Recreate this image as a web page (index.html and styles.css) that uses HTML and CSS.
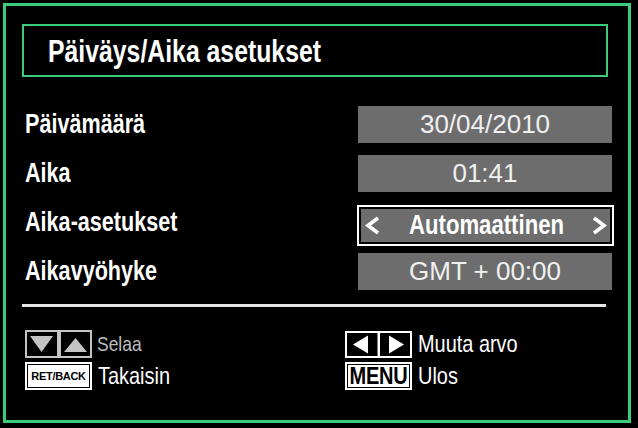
FILE: index.html
```html
<!DOCTYPE html>
<html lang="fi">
<head>
<meta charset="utf-8">
<title>Päiväys/Aika asetukset</title>
<link rel="stylesheet" href="styles.css">
</head>
<body>
<div class="frame">
  <div class="title"><h1>Päiväys/Aika asetukset</h1></div>
  <div class="rows">
    <div class="row"><span class="label">Päivämäärä</span><span class="value">30/04/2010</span></div>
    <div class="row"><span class="label">Aika</span><span class="value">01:41</span></div>
    <div class="row"><span class="label">Aika-asetukset</span>
      <span class="value selected">
        <svg class="chev" width="15" height="19" viewBox="0 0 15 19"><polyline points="13,2 3,9.5 13,17" fill="none" stroke="#fff" stroke-width="3.6"/></svg>
        <span class="sel-text">Automaattinen</span>
        <svg class="chev" width="15" height="19" viewBox="0 0 15 19"><polyline points="2,2 12,9.5 2,17" fill="none" stroke="#fff" stroke-width="3.6"/></svg>
      </span>
    </div>
    <div class="row"><span class="label">Aikavyöhyke</span><span class="value">GMT + 00:00</span></div>
  </div>
  <div class="divider"></div>
  <div class="footer">
    <div class="hint dim">
      <svg width="67" height="28" viewBox="0 0 67 28">
        <rect x="1" y="1" width="32" height="26" fill="#000" stroke="#c4c4c4" stroke-width="2"/>
        <rect x="35" y="1" width="31" height="26" fill="#000" stroke="#c4c4c4" stroke-width="2"/>
        <polygon points="5,6 28,6 16.5,22" fill="#c4c4c4"/>
        <polygon points="39,22 62,22 50.5,8" fill="#c4c4c4"/>
      </svg>
      <span class="htext">Selaa</span>
    </div>
    <div class="hint">
      <svg width="67" height="27" viewBox="0 0 67 27">
        <rect x="1" y="1" width="65" height="25" fill="#000" stroke="#fff" stroke-width="2"/>
        <rect x="32.5" y="1" width="2.5" height="25" fill="#fff"/>
        <polygon points="8,13.5 23,4.5 23,22.5" fill="#fff"/>
        <polygon points="44,4.5 44,22.5 59,13.5" fill="#fff"/>
      </svg>
      <span class="htext">Muuta arvo</span>
    </div>
    <div class="hint">
      <span class="key"><span class="key-in"><span class="ret">RET/BACK</span></span></span>
      <span class="htext">Takaisin</span>
    </div>
    <div class="hint">
      <span class="key"><span class="key-in"><span class="menu">MENU</span></span></span>
      <span class="htext">Ulos</span>
    </div>
  </div>
</div>
</body>
</html>
```

FILE: styles.css
```css
html, body {
  margin: 0;
  padding: 0;
}
body {
  background: #000;
  width: 638px;
  height: 428px;
  overflow: hidden;
  color: #fff;
  font-family: "Liberation Sans", Arial, sans-serif;
}
.frame {
  box-sizing: border-box;
  margin: 3px 0 0 3px;
  width: 628px;
  height: 420px;
  border: 3px solid #3ccb7a;
  padding: 18px 0 0 16px;
}
.title {
  box-sizing: border-box;
  width: 586px;
  height: 53px;
  border: 2px solid #3ccb7a;
  display: flex;
  align-items: center;
  padding-left: 24px;
}
.title h1 {
  margin: 0;
  font-size: 31px;
  font-weight: bold;
  line-height: 1;
  padding-top: 2px;
  white-space: nowrap;
  transform: scaleX(0.8);
  transform-origin: left center;
}
.rows {
  margin-top: 23px;
  padding-left: 3px;
}
.row {
  display: grid;
  grid-template-columns: 333px 254px;
  height: 49px;
  align-items: center;
}
.label {
  font-weight: bold;
  font-size: 27px;
  white-space: nowrap;
  transform: scaleX(0.8);
  transform-origin: left center;
}
.value {
  height: 37px;
  background: #6d6d6d;
  display: flex;
  align-items: center;
  justify-content: center;
  font-size: 26px;
  color: #f0f0f0;
}
.value.selected {
  box-sizing: border-box;
  width: 257px;
  height: 41px;
  margin-left: -1px;
  margin-top: 6px;
  border: 2px solid #fff;
  box-shadow: inset 0 0 0 2px #000;
  justify-content: space-between;
  padding: 0 5px 0 6px;
}
.sel-text {
  display: inline-block;
  font-weight: bold;
  font-size: 27px;
  color: #fff;
  white-space: nowrap;
  transform: scaleX(0.82);
}
.chev {
  display: block;
}
.divider {
  width: 584px;
  height: 3px;
  background: #e6e6e6;
  margin-top: 8px;
}
.footer {
  margin-top: 23px;
  padding-left: 3px;
  display: grid;
  grid-template-columns: 320px auto;
  grid-auto-rows: 28px;
  row-gap: 4px;
}
.hint {
  display: flex;
  align-items: center;
  gap: 6px;
  font-size: 24px;
  color: #fff;
}
.hint svg {
  display: block;
  flex: none;
}
.htext {
  display: inline-block;
  white-space: nowrap;
  transform: scaleX(0.83);
  transform-origin: left center;
}
.hint.dim {
  color: #bdbdbd;
  font-size: 21px;
  gap: 5px;
}
.key {
  box-sizing: border-box;
  flex: none;
  width: 67px;
  height: 28px;
  border: 2px solid #fff;
  padding: 1px;
  background: #000;
  display: flex;
}
.key-in {
  flex: 1;
  background: #fff;
  color: #000;
  display: flex;
  align-items: center;
  justify-content: center;
  font-weight: bold;
}
.ret {
  font-size: 11px;
  letter-spacing: -0.3px;
  white-space: nowrap;
}
.menu {
  display: inline-block;
  font-size: 20px;
  line-height: 1;
  letter-spacing: -0.2px;
  white-space: nowrap;
  transform: scaleY(1.18);
}
```
